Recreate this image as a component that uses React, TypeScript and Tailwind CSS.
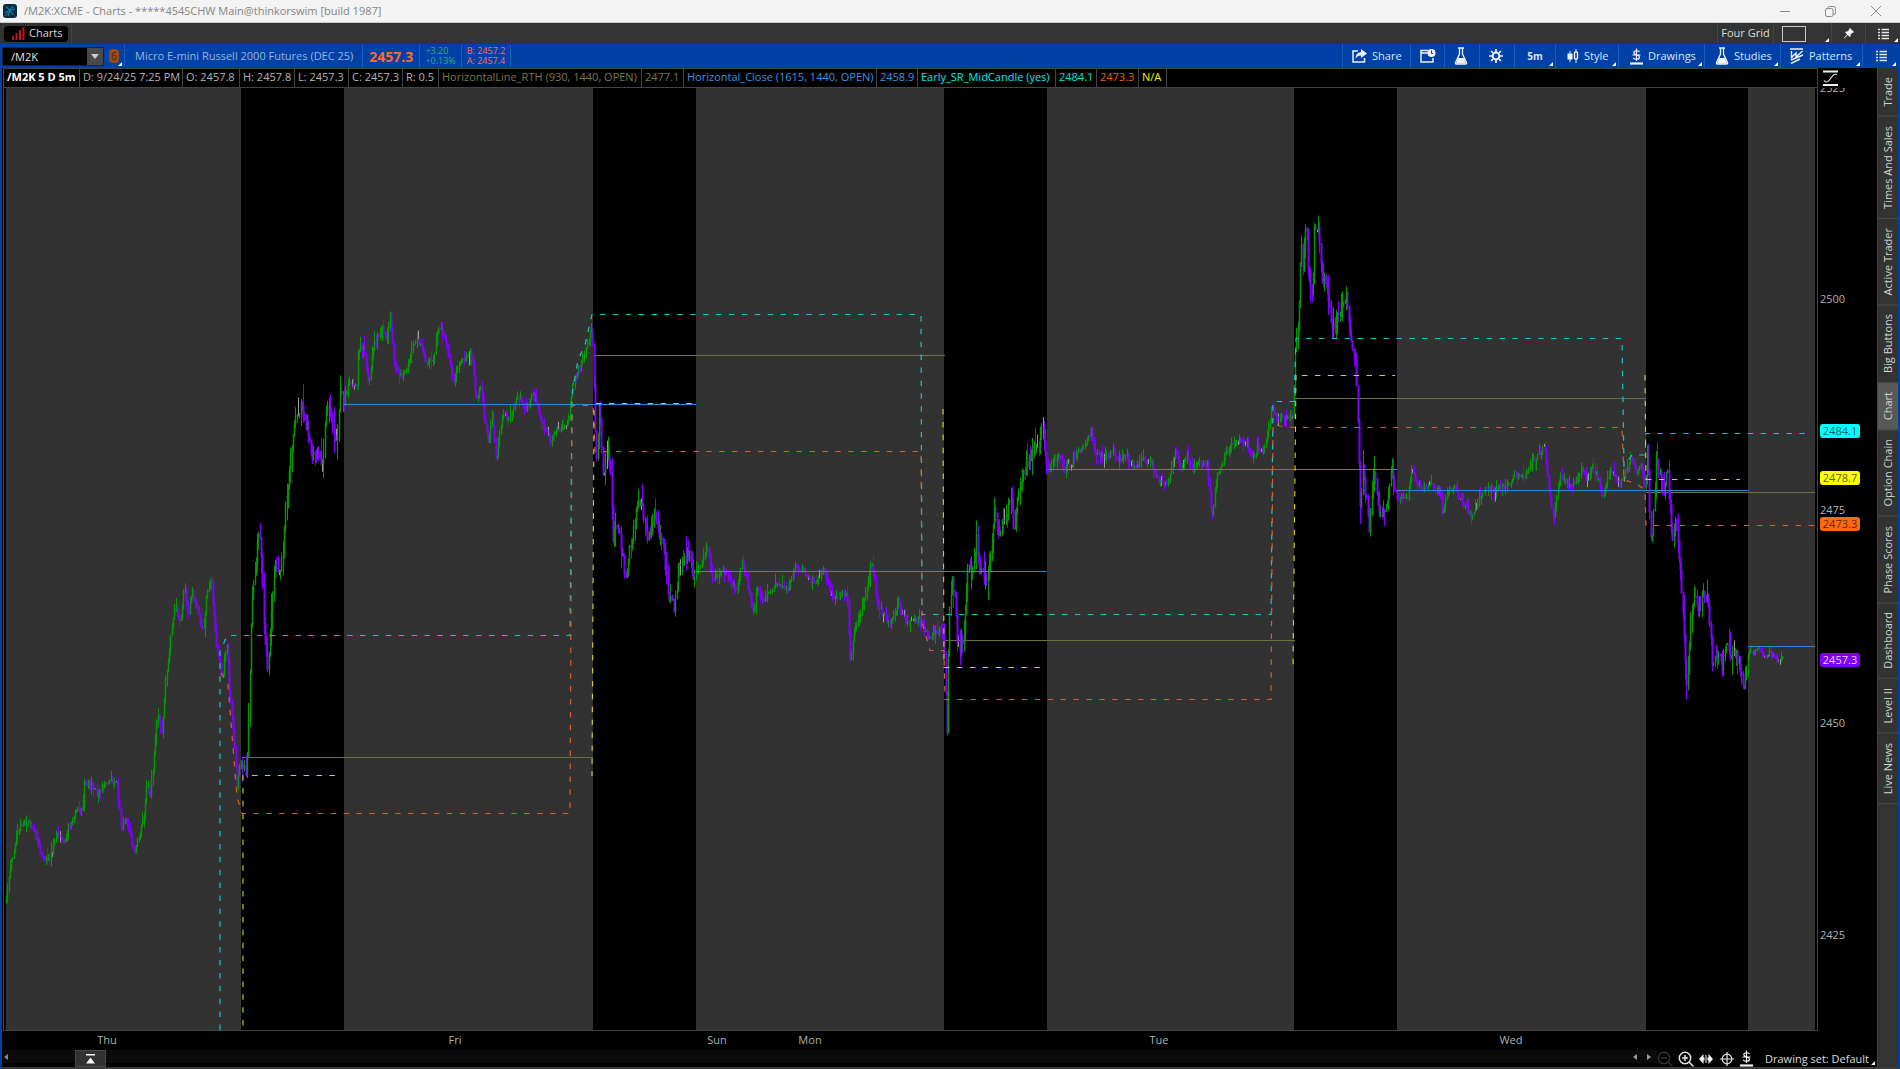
import React from 'react';

const PLOT = { left: 4, top: 88, width: 1813, height: 942 };

const SESSIONS: [number, number][] = [
  [6, 241], [344, 593], [696, 944], [1047, 1294], [1397, 1646], [1748, 1815],
];

const PRICE_PATH: [number, number][] = [
  [6, 903], [8, 877], [15, 844], [20, 823], [28, 822], [33, 827], [36, 837], [42, 860], [50, 858], [55, 837], [63, 840],
  [68, 828], [75, 813], [82, 806], [84, 781], [90, 783], [97, 793], [102, 785], [110, 779], [117, 786], [121, 827],
  [125, 820], [130, 837], [135, 850], [143, 823], [147, 783], [150, 796], [153, 763], [157, 715], [162, 732], [165, 682],
  [170, 641], [175, 604], [180, 621], [184, 587], [188, 614], [192, 590], [197, 611], [203, 631], [207, 591], [211, 580],
  [213, 611], [217, 651], [222, 675], [227, 645], [229, 688], [233, 729], [237, 788], [240, 759], [244, 763], [246, 782],
  [249, 700], [250, 640], [252, 601], [255, 566], [259, 530], [262, 576], [264, 637], [268, 670], [272, 601], [275, 562],
  [279, 576], [283, 555], [285, 509], [289, 466], [295, 423], [301, 405], [307, 430], [312, 459], [320, 455], [323, 466],
  [325, 423], [329, 400], [333, 430], [337, 444], [340, 384], [344, 398], [348, 384], [357, 385], [358, 346], [364, 350],
  [368, 384], [373, 348], [382, 326], [387, 339], [390, 313], [393, 355], [399, 376], [406, 375], [413, 341], [418, 339],
  [425, 359], [433, 359], [439, 325], [447, 344], [453, 380], [460, 364], [468, 351], [471, 352], [476, 398], [480, 385],
  [483, 405], [488, 446], [492, 412], [496, 460], [503, 409], [508, 421], [518, 396], [525, 412], [533, 394], [542, 426],
  [550, 439], [558, 430], [567, 423], [572, 387], [578, 369], [585, 355], [592, 326], [593, 360], [596, 467], [599, 400],
  [603, 480], [607, 450], [611, 482], [613, 542], [617, 523], [625, 574], [630, 547], [639, 493], [648, 538], [654, 513],
  [662, 543], [669, 597], [675, 609], [678, 567], [690, 556], [693, 580], [700, 567], [707, 546], [713, 580], [722, 570],
  [737, 590], [742, 558], [753, 614], [757, 590], [763, 600], [778, 582], [787, 590], [795, 566], [803, 570], [813, 585],
  [823, 570], [833, 600], [847, 592], [850, 660], [855, 630], [862, 607], [872, 561], [877, 607], [890, 622], [898, 603],
  [905, 620], [920, 620], [928, 638], [940, 630], [944, 643], [947, 733], [949, 613], [952, 573], [955, 607], [958, 649],
  [963, 640], [966, 593], [968, 562], [972, 573], [976, 537], [980, 570], [987, 587], [991, 547], [994, 513], [999, 533],
  [1005, 517], [1010, 501], [1014, 527], [1019, 487], [1027, 463], [1032, 450], [1038, 447], [1042, 417], [1047, 470],
  [1058, 455], [1063, 467], [1072, 462], [1077, 452], [1085, 447], [1091, 431], [1093, 450], [1107, 457], [1112, 450],
  [1118, 460], [1125, 453], [1135, 468], [1142, 458], [1152, 462], [1158, 483], [1168, 482], [1176, 448], [1180, 470],
  [1187, 457], [1193, 470], [1198, 464], [1207, 463], [1212, 518], [1217, 473], [1227, 450], [1235, 439], [1247, 443],
  [1252, 460], [1257, 447], [1260, 455], [1267, 440], [1271, 406], [1277, 420], [1283, 417], [1293, 414], [1295, 343],
  [1298, 330], [1301, 235], [1303, 273], [1306, 217], [1307, 255], [1312, 303], [1314, 230], [1318, 228], [1321, 273],
  [1327, 287], [1332, 333], [1340, 308], [1347, 297], [1350, 340], [1355, 360], [1358, 433], [1360, 505], [1363, 470],
  [1369, 528], [1373, 470], [1380, 515], [1387, 507], [1392, 464], [1395, 497], [1407, 498], [1412, 468], [1417, 487],
  [1427, 485], [1440, 490], [1442, 515], [1447, 493], [1453, 485], [1462, 503], [1471, 516], [1483, 490], [1507, 487],
  [1515, 473], [1525, 477], [1530, 463], [1537, 457], [1545, 447], [1548, 480], [1553, 518], [1560, 477], [1570, 487],
  [1577, 477], [1582, 468], [1587, 480], [1592, 468], [1597, 475], [1603, 498], [1610, 470], [1620, 485], [1625, 473],
  [1632, 458], [1637, 473], [1641, 460], [1645, 490], [1647, 438], [1651, 548], [1656, 460], [1663, 490], [1667, 472],
  [1672, 537], [1675, 520], [1679, 557], [1682, 607], [1687, 688], [1690, 620], [1695, 590], [1698, 612], [1703, 586],
  [1708, 600], [1712, 660], [1720, 658], [1722, 672], [1726, 640], [1731, 660], [1735, 648], [1744, 686], [1748, 653],
  [1760, 648], [1763, 658], [1770, 653], [1777, 661], [1783, 658],
];

function buildCandles() {
  let seed = 7919;
  const rand = () => {
    seed = (seed * 16807) % 2147483647;
    return seed / 2147483647;
  };
  const inSession = (x: number) => SESSIONS.some(([a, b]) => x >= a && x <= b);
  const out = { up: '', down: '', upWick: '', downWick: '', flat: '' };
  let i = 0;
  let prev = PRICE_PATH[0][1];
  for (let x = 6; x <= 1783; x += 1.275) {
    while (i < PRICE_PATH.length - 2 && PRICE_PATH[i + 1][0] < x) i++;
    const [x0, y0] = PRICE_PATH[i];
    const [x1, y1] = PRICE_PATH[i + 1];
    const t = Math.min(1, (x - x0) / (x1 - x0));
    const amp = x > 1748 ? 5 : inSession(x) ? 7 : 13;
    const close = y0 + (y1 - y0) * t + (rand() - 0.5) * amp;
    const hi = Math.min(prev, close);
    const lo = Math.max(prev, close);
    const px = Math.round(x) + 0.5;
    const body = `M${px} ${hi.toFixed(1)}V${(lo + 0.6).toFixed(1)}`;
    const wick = `M${px} ${(hi - rand() * rand() * amp * 1.7).toFixed(1)}V${(lo + rand() * rand() * amp * 1.7).toFixed(1)}`;
    if (lo - hi < 0.35) {
      out.flat += wick;
    } else if (close < prev) {
      out.up += body;
      out.upWick += wick;
    } else {
      out.down += body;
      out.downWick += wick;
    }
    prev = close;
  }
  return out;
}

const CANDLES = buildCandles();

const CLOSE_LINES = 'M344 404.5H696M696 571.5H1047M1047 469.5H1397M1397 490.5H1749M1748 646.5H1815';
const OPEN_LINES = 'M242 757.5H593M593 355.5H945M944 640.5H1295M1294 398.5H1646M1646 492.5H1815';
const HIGH_LINE =
  'M220 1030V652L227 635.5H570L572 395L578 360L585 345L592 314.5H921L922 614.5H1271L1273 401.5H1294L1296 338.5H1622L1624 466L1632 455H1645L1646 433.5H1808';
const LOW_LINE =
  'M221 673L228 685L237 797L242 813.5H570L572 405.5H593L595 451.5H921L922 622L930 650.5H944L945 699.5H1271L1273 424L1280 426L1295 427.5H1622L1624 480L1637 484L1645 490L1646 525.5H1815';
const MID_LINES = [
  'M252 775.5H335', 'M243 775V1026', 'M596 403.5H695', 'M594 410L592 776', 'M944 667.5H1042', 'M943 409L944 668',
  'M1302 375.5H1395', 'M1296 375L1293 667', 'M1646 479.5H1740', 'M1645 375L1646 480',
];

const pct = (y: number) => `${((y - PLOT.top) / PLOT.height) * 100}%`;

const PRICES: [string, number][] = [['2525', 88], ['2500', 299], ['2475', 510], ['2450', 722], ['2425', 934]];
const TAGS: [string, number, string][] = [
  ['2484.1', 431, 'bg-[#00ffff] text-[#006868]'],
  ['2478.7', 478, 'bg-[#ffff00] text-[#5c5c00]'],
  ['2473.3', 524, 'bg-[#ff6a13] text-[#6b2400]'],
  ['2457.3', 659, 'bg-[#8000ff] text-[#e8d5ff]'],
];
const DAYS: [string, number][] = [['Thu', 107], ['Fri', 455], ['Sun', 717], ['Mon', 810], ['Tue', 1159], ['Wed', 1511]];
const STATUS: [string, string][] = [
  ['/M2K 5 D 5m', 'text-white font-bold w-[76px]'],
  ['D: 9/24/25 7:25 PM', 'text-[#b4b4b4] w-[103px]'],
  ['O: 2457.8', 'text-[#b4b4b4] w-[57px]'],
  ['H: 2457.8', 'text-[#b4b4b4] w-[55px]'],
  ['L: 2457.3', 'text-[#b4b4b4] w-[54px]'],
  ['C: 2457.3', 'text-[#b4b4b4] w-[54px]'],
  ['R: 0.5', 'text-[#b4b4b4] w-[36px]'],
  ['HorizontalLine_RTH (930, 1440, OPEN)', 'text-[#77774a] w-[203px]'],
  ['2477.1', 'text-[#77774a] w-[42px]'],
  ['Horizontal_Close (1615, 1440, OPEN)', 'text-[#3a90e0] w-[193px]'],
  ['2458.9', 'text-[#3a90e0] w-[41px]'],
  ['Early_SR_MidCandle (yes)', 'text-[#00e8e8] w-[138px]'],
  ['2484.1', 'text-[#00e0d8] w-[41px]'],
  ['2473.3', 'text-[#e8600f] w-[42px]'],
  ['N/A', 'text-[#f0f000] w-[28px]'],
];
const SIDE_TABS = [
  'Trade', 'Times And Sales', 'Active Trader', 'Big Buttons', 'Chart', 'Option Chain', 'Phase Scores', 'Dashboard',
  'Level II', 'Live News',
];

function Corner() {
  return (
    <svg className="absolute right-0.5 bottom-0.5 size-1" viewBox="0 0 4 4" aria-hidden="true">
      <path d="M4 0V4H0Z" fill="#fff" />
    </svg>
  );
}

function ListIcon() {
  return (
    <svg width="11" height="12" viewBox="0 0 11 12" stroke="#e4e4e4" strokeWidth="1.4" aria-hidden="true">
      <path d="M0 1.5H2M3.5 1.5H11M0 4.5H2M3.5 4.5H11M0 7.5H2M3.5 7.5H11M0 10.5H2M3.5 10.5H11" />
    </svg>
  );
}

function FlaskIcon() {
  return (
    <svg width="14" height="18" viewBox="0 0 14 18" aria-hidden="true">
      <path d="M4 1H10M5.5 1V7L1.5 15.5Q1 17 2.5 17H11.5Q13 17 12.5 15.5L8.500 7V1" fill="none" stroke="#f0f0f0" strokeWidth="1.300" />
      <path d="M4.200 11H9.800L12.200 16.500H1.800Z" fill="#f0f0f0" />
    </svg>
  );
}

function DollarIcon() {
  return (
    <svg width="13" height="17" viewBox="0 0 13 17" fill="none" stroke="#f0f0f0" aria-hidden="true">
      <path d="M9.500 3.800C8.500 2.300 3.800 2.200 3.800 4.700S9.500 6.500 9.500 9.200S4.500 11.700 3.200 9.800M6.500 .5V13M2.500 7H10.500" strokeWidth="1.200" />
      <path d="M0 15.500H13" strokeWidth="2.200" />
    </svg>
  );
}

function ToolButton({ className, label, children, corner, text }: {
  className: string; label: string; text?: string; corner?: boolean; children?: React.ReactNode;
}) {
  return (
    <button
      type="button"
      aria-label={label}
      className={`relative flex h-full items-center gap-[5px] border-l border-[#1d5bb8] text-[11px] text-[#dbe4f4] ${className}`}
    >
      {children}
      {text && <span>{text}</span>}
      {corner && <Corner />}
    </button>
  );
}

function TitleBar() {
  return (
    <header className="flex h-[23px] shrink-0 items-center border-b border-[#c8c8c8] bg-[#f3f3f3] pl-[3px]">
      <svg width="14" height="14" viewBox="0 0 14 14" aria-hidden="true">
        <rect width="14" height="14" rx="3" fill="#082b40" />
        <path d="M7 6.500L3 2.500M7 6.500L9.500 2M7 6.500L12 5M7 6.500L10.500 11M7 6.500L5 12M7 6.500L2 8.500" stroke="#0a84ac" strokeWidth="1.100" />
        <path d="M2 12L6 8M8 5L11 2.500" stroke="#0a5f80" strokeWidth="1.500" />
      </svg>
      <h1 className="ml-[7px] text-[11px] text-[#858585]">/M2K:XCME - Charts - *****454SCHW Main@thinkorswim [build 1987]</h1>
      <div className="ml-auto flex h-full">
        <button type="button" aria-label="Minimize" className="flex w-[46px] items-center justify-center">
          <svg width="10" height="10" stroke="#8a8a8a"><path d="M0 5.500H10" /></svg>
        </button>
        <button type="button" aria-label="Restore" className="flex w-[44px] items-center justify-center">
          <svg width="11" height="11" fill="none" stroke="#8a8a8a">
            <rect x=".5" y="2.500" width="7.500" height="8" rx="1.500" />
            <path d="M3 2.500V2Q3 .5 4.500 .5H8.500Q10.500 .5 10.500 2.500V7Q10.500 8.500 9 8.500H8" />
          </svg>
        </button>
        <button type="button" aria-label="Close" className="flex w-[48px] items-center justify-center">
          <svg width="10" height="10" stroke="#8a8a8a"><path d="M0 0L10 10M10 0L0 10" /></svg>
        </button>
      </div>
    </header>
  );
}

function TabRow() {
  return (
    <nav className="flex h-[21px] shrink-0 items-center bg-[#333]">
      <div className="flex h-full items-center border-r border-[#444] pr-[3px] pl-1">
        <button type="button" className="flex h-4 w-[64px] items-center gap-1 rounded bg-black pl-2 text-[11px] text-[#dcdcdc]">
          <svg width="13" height="13" fill="#c01515" aria-hidden="true">
            <path d="M0 9H2V13H0ZM3.500 6H5.500V13H3.500ZM7 3H9V13H7ZM10.500 0H12.500V13H10.500Z" />
          </svg>
          Charts
        </button>
      </div>
      <div className="ml-auto flex h-full text-[11px] text-[#dcdcdc]">
        <button type="button" className="w-[56px] border-l border-[#444] whitespace-nowrap">Four Grid</button>
        <button type="button" aria-label="Grid layout" className="relative w-[58px] border-l border-[#444] pl-2">
          <span className="block h-4 w-6 border border-[#c8c8c8]" />
          <Corner />
        </button>
        <button type="button" aria-label="Pin" className="flex w-[34px] items-center justify-center border-l border-[#444]">
          <svg width="10" height="11" viewBox="0 0 10 11" fill="#f0f0f0" aria-hidden="true">
            <path d="M6 0L10 4L9 5L8.400 4.800L6.500 6.800L6.600 8.200L5.800 9L3.600 6.900L.6 10.500L0 10L3.100 6.400L1 4.300L1.800 3.500L3.300 3.600L5.300 1.700L5 1Z" />
          </svg>
        </button>
        <button type="button" aria-label="Layout menu" className="relative flex w-[35px] items-center justify-center border-l border-[#444]">
          <ListIcon />
          <Corner />
        </button>
      </div>
    </nav>
  );
}

function Toolbar() {
  return (
    <div className="flex h-6 shrink-0 items-center bg-[#0041a8]">
      <div className="flex h-[19px] w-[102px] items-center border border-[#222] bg-black">
        <input aria-label="Symbol" defaultValue="/M2K" className="h-full min-w-0 flex-1 bg-transparent pl-2 text-[11px] text-[#e4e4e4] outline-none" />
        <button type="button" aria-label="Open symbol list" className="flex h-full w-4 items-center justify-center bg-[#4a4a4a]">
          <svg width="8" height="6" fill="#ccc"><path d="M0 1H8L4 6Z" /></svg>
        </button>
      </div>
      <button type="button" aria-label="Link group 6" className="relative ml-1 flex h-full w-4 items-center pl-px">
        <span className="flex h-3.5 w-[10px] items-center justify-center rounded-sm bg-[#a04a10] text-[11px] text-[#3c2a3a]">6</span>
        <Corner />
      </button>
      <div className="flex h-[22px] items-center border-l border-[#1d5bb8] pr-[9px] pl-[10px] text-[11px] whitespace-nowrap text-[#9db2d8]">
        Micro E-mini Russell 2000 Futures (DEC 25)
      </div>
      <div className="flex h-[22px] items-center border-x border-[#1d5bb8] px-[6px] text-[14px] font-bold text-[#ff6a2a]">2457.3</div>
      <div className="flex h-[22px] flex-col justify-center border-r border-[#1d5bb8] px-[5px] text-[9px] leading-[10px] text-[#22b07a]">
        <span className="h-[10px]">+3.20</span>
        <span className="h-[10px]">+0.13%</span>
      </div>
      <div className="flex h-[22px] flex-col justify-center border-r border-[#1d5bb8] px-[5px] text-[9px] leading-[10px] text-[#ff6a60]">
        <span className="h-[10px]">B: 2457.2</span>
        <span className="h-[10px]">A: 2457.4</span>
      </div>
      <div className="ml-auto flex h-full">
        <ToolButton className="w-[68px] pl-[9px]" label="Share" text="Share">
          <svg width="15" height="14" viewBox="0 0 15 14" aria-hidden="true">
            <path d="M6 2H1V13H12.500V9" fill="none" stroke="#f0f0f0" strokeWidth="1.500" />
            <path d="M9 0L15 4.500L9 9V6.500Q5 6.500 3.500 10Q3.500 3.500 9 3Z" fill="#f0f0f0" />
          </svg>
        </ToolButton>
        <ToolButton className="w-[34px] pl-[9px]" label="Calendar alert">
          <svg width="16" height="14" viewBox="0 0 16 14" aria-hidden="true">
            <path d="M8 1.500H1V13H13V9M1 4H8" fill="none" stroke="#f0f0f0" strokeWidth="1.500" />
            <circle cx="11.500" cy="4" r="4" fill="#f0f0f0" />
            <path d="M11.500 1.500V4.500H13" stroke="#0041a8" fill="none" />
          </svg>
        </ToolButton>
        <ToolButton className="w-[35px] pl-[9px]" label="Edit studies"><FlaskIcon /></ToolButton>
        <ToolButton className="w-[35px] pl-[9px]" label="Settings">
          <svg width="14" height="14" viewBox="-7 -7 14 14" stroke="#f0f0f0" fill="none" aria-hidden="true">
            <circle r="3.400" strokeWidth="2" />
            <path d="M0-7V-4M0 4V7M-7 0H-4M4 0H7M-5-5L-3-3M3 3L5 5M5-5L3-3M-5 5L-3 3" strokeWidth="1.700" />
          </svg>
        </ToolButton>
        <ToolButton className="w-[41px] justify-center font-bold" label="Time frame" corner>
          <span className="text-[10px]">5m</span>
        </ToolButton>
        <ToolButton className="w-[63px] pl-[11px]" label="Style" text="Style" corner>
          <svg width="12" height="14" viewBox="0 0 12 14" stroke="#f0f0f0" aria-hidden="true">
            <path d="M3 2V13M9 0V3M9 10V14" />
            <rect x="1" y="5" width="4" height="5" fill="#f0f0f0" />
            <rect x="7.500" y="3" width="3" height="7" rx="1" fill="none" strokeWidth="1.400" />
          </svg>
        </ToolButton>
        <ToolButton className="w-[86px] pl-[11px]" label="Drawings" text="Drawings" corner><DollarIcon /></ToolButton>
        <ToolButton className="w-[76px] pl-[10px]" label="Studies" text="Studies" corner><FlaskIcon /></ToolButton>
        <ToolButton className="w-[82px] pl-[9px]" label="Patterns" text="Patterns" corner>
          <svg width="14" height="16" viewBox="0 0 14 16" fill="none" stroke="#f0f0f0" strokeWidth="1.400" aria-hidden="true">
            <path d="M0 1H13M1.500 3V9.500L6 5V9L12.500 3M1 12L13 7M1 15.500L10 11" />
          </svg>
        </ToolButton>
        <ToolButton className="w-9 pl-[13px]" label="Chart menu" corner><ListIcon /></ToolButton>
      </div>
    </div>
  );
}

function Plot() {
  return (
    <svg
      role="img"
      aria-label="Five day price chart"
      className="block size-full"
      viewBox={`${PLOT.left} ${PLOT.top} ${PLOT.width} ${PLOT.height}`}
      preserveAspectRatio="none"
      fill="none"
    >
      {SESSIONS.map(([a, b]) => (
        <rect key={a} x={a} y={88} width={b - a} height={942} fill="#323232" />
      ))}
      <path d={OPEN_LINES} stroke="#6e6e3e" />
      <path d={CANDLES.downWick} stroke="#7f00ff" />
      <path d={CANDLES.upWick} stroke="#009900" />
      <path d={CANDLES.flat} stroke="#9a9a9a" />
      <path d={CANDLES.down} stroke="#7f00ff" strokeWidth="2" />
      <path d={CANDLES.up} stroke="#009900" strokeWidth="1.500" />
      <path d={CLOSE_LINES} stroke="#2f86d6" />
      <path d={HIGH_LINE} stroke="#16c4c8" strokeWidth="1.200" strokeDasharray="5.500 7.400" />
      <path d={LOW_LINE} stroke="#d2602a" strokeWidth="1.200" strokeDasharray="5.500 7.400" />
      {MID_LINES.map((d) => (
        <path key={d} d={d} stroke="#d6d61c" strokeWidth="1.100" strokeDasharray="5.500 7.400" />
      ))}
    </svg>
  );
}

function BottomBar() {
  return (
    <footer className="flex h-[17px] shrink-0 items-center bg-black">
      <div className="flex h-[13px] flex-1 items-center self-start bg-[#0b0b0b]">
        <button type="button" aria-label="Scroll left" className="w-[72px] pl-px">
          <svg width="4" height="6" fill="#888"><path d="M4 0V6L0 3Z" /></svg>
        </button>
        <button type="button" aria-label="Expand lower panel" className="flex h-[17px] w-[31px] items-center justify-center self-start border border-[#484848] bg-[#323232]">
          <svg width="9" height="10" fill="#f4f4f4"><path d="M0 0H9V1.500H0ZM4.500 3.500L9 9.500H0Z" /></svg>
        </button>
        <div className="ml-auto flex gap-2.5 pr-1.5">
          <button type="button" aria-label="Previous">
            <svg width="4" height="6" fill="#999"><path d="M4 0V6L0 3Z" /></svg>
          </button>
          <button type="button" aria-label="Next">
            <svg width="4" height="6" fill="#999"><path d="M0 0V6L4 3Z" /></svg>
          </button>
        </div>
      </div>
      <div className="flex items-center gap-[5px]">
        <button type="button" aria-label="Zoom out">
          <svg width="16" height="16" fill="none" stroke="#333" strokeWidth="1.500"><circle cx="7" cy="7" r="5.700" /><path d="M11 11L15.500 15.500M4 7H10" /></svg>
        </button>
        <button type="button" aria-label="Zoom in">
          <svg width="16" height="16" fill="none" stroke="#e8e8e8" strokeWidth="1.500"><circle cx="7" cy="7" r="5.700" /><path d="M11 11L15.500 15.500M4 7H10M7 4V10" /></svg>
        </button>
        <button type="button" aria-label="Fit width">
          <svg width="14" height="10" fill="#f4f4f4"><path d="M0 5L4.500 0V3.500H5.500V6.500H4.500V10ZM14 5L9.500 0V3.500H8.500V6.500H9.500V10ZM6.500 1H7.500V9H6.500Z" /></svg>
        </button>
        <button type="button" aria-label="Crosshair" className="ml-0.5">
          <svg width="14" height="14" fill="none" stroke="#e8e8e8" strokeWidth="1.200"><circle cx="7" cy="7" r="4.800" /><path d="M7 0V14M0 7H14" /></svg>
        </button>
        <button type="button" aria-label="Drawing tool" className="ml-px"><DollarIcon /></button>
      </div>
      <button type="button" className="relative ml-3 h-full pr-2 text-[11px] leading-4 text-[#dcdcdc]">
        Drawing set: Default
        <Corner />
      </button>
    </footer>
  );
}

export default function App() {
  return (
    <div className="flex h-screen min-w-0 flex-col overflow-hidden bg-black font-['Open_Sans','Noto_Sans',sans-serif]">
      <TitleBar />
      <TabRow />
      <div className="flex min-h-0 flex-1 flex-col border-x-2 border-b-2 border-x-[#0041a8] border-b-[#3a3a3a]">
        <Toolbar />
        <div className="flex min-h-0 flex-1">
          <main className="flex min-w-0 flex-1 flex-col pl-px">
            <div className="flex min-h-0 flex-1">
              <section className="flex min-w-0 flex-1 flex-col border border-[#444]">
                <div className="flex h-[19px] shrink-0 border-b border-[#444] text-[11px] leading-4 whitespace-nowrap">
                  {STATUS.map(([text, cls], i) => (
                    <span key={i} className={`shrink-0 border-r border-[#444] pl-[3px] ${cls}`}>{text}</span>
                  ))}
                </div>
                <div className="min-h-0 flex-1"><Plot /></div>
              </section>
              <aside className="flex w-[59px] shrink-0 flex-col" aria-label="Price axis">
                <button type="button" aria-label="Scale type" className="h-5 shrink-0 pl-[5px]">
                  <svg width="16" height="16" fill="none" stroke="#eee">
                    <path d="M0 1.500H15M0 15H15" strokeWidth="2" />
                    <path d="M1 10.500C2 12.500 4.500 12.500 6 10.500L9.500 6C11 4 12.500 4 14 4.500" strokeWidth="1.200" />
                  </svg>
                </button>
                <div className="relative flex-1 text-[11px] leading-[14px] text-[#b0b0b0] [clip-path:inset(0_0_0_0)]">
                  {PRICES.map(([label, y]) => (
                    <span key={label} className="absolute left-[2px] -translate-y-1/2" style={{ top: pct(y) }}>{label}</span>
                  ))}
                  {TAGS.map(([label, y, cls]) => (
                    <span key={label} className={`absolute left-[2px] w-10 -translate-y-1/2 rounded-[3px] text-center leading-[14px] ${cls}`} style={{ top: pct(y) }}>
                      {label}
                    </span>
                  ))}
                </div>
              </aside>
            </div>
            <div className="relative h-[19px] shrink-0 text-[11px] leading-[18px] text-[#b0b0b0]">
              {DAYS.map(([label, x]) => (
                <span key={label} className="absolute -translate-x-1/2" style={{ left: `${((x - 3) / 1874) * 100}%` }}>{label}</span>
              ))}
            </div>
            <BottomBar />
          </main>
          <nav className="flex w-[21px] shrink-0 flex-col border-l border-[#444] bg-[#333]" aria-label="Gadgets">
            {SIDE_TABS.map((tab) => (
              <button
                key={tab}
                type="button"
                className={`flex w-5 rotate-180 items-center justify-center border-t border-[#4a4a4a] pt-[9px] pb-[9px] text-[11px] leading-5 whitespace-nowrap text-[#d2d2d2] [writing-mode:vertical-rl] ${tab === 'Chart' ? 'bg-[#585858]' : ''}`}
              >
                {tab}
              </button>
            ))}
          </nav>
        </div>
      </div>
    </div>
  );
}
